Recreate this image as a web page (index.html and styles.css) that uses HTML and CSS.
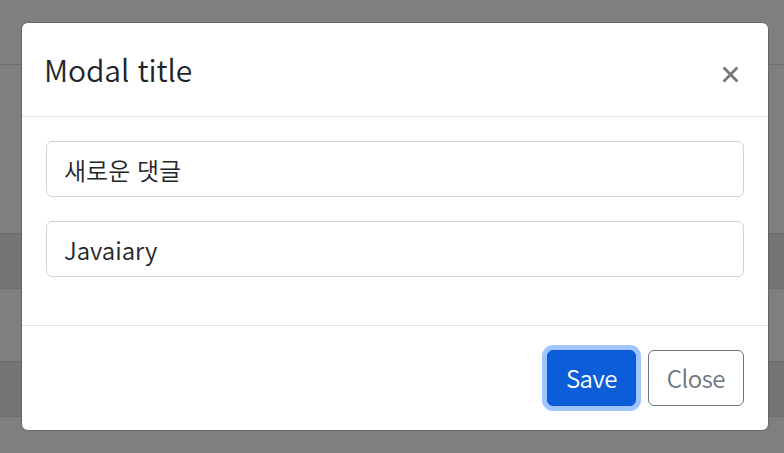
FILE: index.html
```html
<!DOCTYPE html>
<html lang="ko">
<head>
<meta charset="utf-8">
<title>Modal</title>
<link rel="stylesheet" href="styles.css">
</head>
<body>
<div class="page">
  <div class="row row-head"></div>
  <div class="row row-a"></div>
  <div class="row row-b"></div>
  <div class="row row-c"></div>
  <div class="row row-d"></div>
  <div class="row row-e"></div>
</div>
<div class="modal">
  <div class="modal-header">
    <h5 class="modal-title">Modal title</h5>
    <button class="close" type="button" aria-label="Close">
      <svg viewBox="0 0 16 16" width="17" height="17"><path d="M1.5 1.5L14.5 14.5M14.5 1.5L1.5 14.5" stroke="currentColor" stroke-width="2.6" stroke-linecap="butt"/></svg>
    </button>
  </div>
  <div class="modal-body">
    <div class="form-group"><input class="form-control" type="text" value="새로운 댓글"></div>
    <div class="form-group"><input class="form-control" type="text" value="Javaiary"></div>
  </div>
  <div class="modal-footer">
    <button class="btn btn-primary" type="button">Save</button>
    <button class="btn btn-outline" type="button">Close</button>
  </div>
</div>
</body>
</html>
```
FILE: styles.css
```css
html, body {
  margin: 0;
  padding: 0;
  height: 100%;
  overflow: hidden;
}
body {
  font-family: "Noto Sans CJK KR", "Noto Sans", sans-serif;
  font-weight: 350;
  background: #7f7f7f;
}
.page {
  display: flex;
  flex-direction: column;
}
.row {
  border-bottom: 1px solid #6c6d6e;
  box-sizing: border-box;
  background: #7f7f7f;
}
.row-head { height: 65px; background: #7e7f7e; }
.row-a { height: 169px; }
.row-b { height: 55px; background: #737475; }
.row-c { height: 73px; }
.row-d { height: 55px; background: #737475; }
.row-e { height: 40px; border-bottom: none; }
.modal {
  position: absolute;
  left: 21px;
  top: 22px;
  width: 748px;
  box-sizing: border-box;
  background: #fff;
  border: 1px solid #666;
  border-radius: 7px;
  display: flex;
  flex-direction: column;
  color: #212529;
}
.modal-header {
  display: flex;
  align-items: center;
  justify-content: space-between;
  padding: 24px 24px 24px 22px;
  border-bottom: 1px solid #dee2e6;
}
.modal-title {
  margin: 0;
  font-size: 30px;
  font-weight: 350;
  line-height: 45px;
  letter-spacing: -0.1px;
}
.close {
  border: 0;
  background: transparent;
  padding: 0;
  margin: 9px 5px 0 0;
  width: 17px;
  height: 17px;
  color: #787878;
  display: flex;
}
.modal-body {
  padding: 24px;
  display: flex;
  flex-direction: column;
  gap: 24px;
  padding-bottom: 48px;
}
.form-control {
  display: block;
  width: 100%;
  box-sizing: border-box;
  height: 56px;
  padding: 9px 17px;
  font-family: inherit;
  font-weight: 350;
  font-size: 24px;
  line-height: 36px;
  color: #212529;
  border: 1px solid #ced4da;
  border-radius: 6px;
  outline: none;
  background: #fff;
}
.modal-footer {
  display: flex;
  justify-content: flex-end;
  align-items: center;
  padding: 18px;
  border-top: 1px solid #dee2e6;
}
.btn {
  margin: 6px;
  height: 56px;
  padding: 9px 18px;
  font-family: inherit;
  font-weight: 350;
  font-size: 24px;
  line-height: 36px;
  letter-spacing: -0.5px;
  border-radius: 6px;
  box-sizing: border-box;
  cursor: pointer;
}
.btn-primary {
  background: #0b5ed7;
  border: 1px solid #0a58ca;
  color: #fff;
  box-shadow: 0 0 0 5px #9ec5fe;
}
.btn-outline {
  background: #fff;
  border: 1px solid #6c757d;
  color: #6c757d;
}
```
